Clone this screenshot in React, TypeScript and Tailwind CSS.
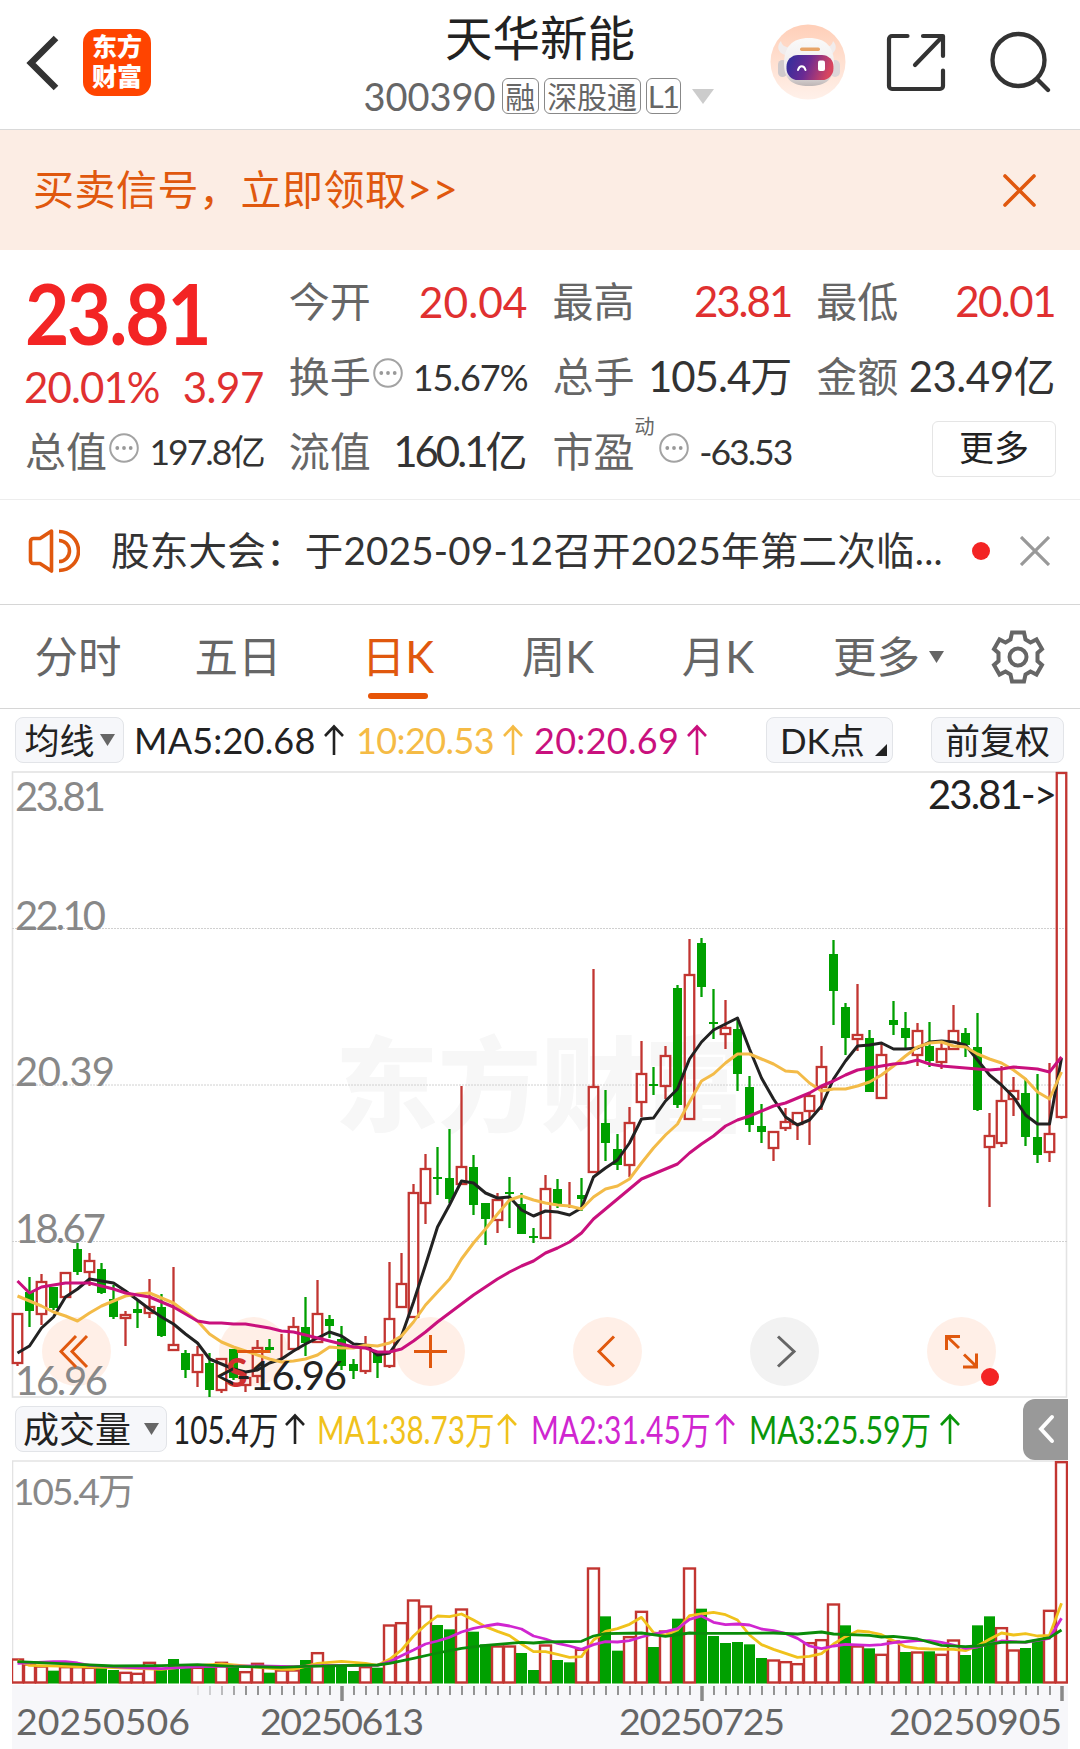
import type { ReactNode } from 'react'

type Candle = [top: number, bottom: number, high: number, low: number, up: 0 | 1]

// one entry per trading day, in chart coordinates
const candles: Candle[] = [
  [1314, 1363, 1314, 1366, 1], [1292, 1311, 1277, 1327, 0], [1282, 1314, 1274, 1325, 1], [1287, 1308, 1287, 1310, 0],
  [1273, 1297, 1273, 1297, 1], [1249, 1272, 1243, 1275, 0], [1261, 1272, 1253, 1286, 1], [1269, 1293, 1263, 1294, 0],
  [1299, 1317, 1285, 1319, 0], [1315, 1318, 1311, 1346, 1], [1309, 1313, 1300, 1328, 0], [1307, 1313, 1279, 1318, 1],
  [1307, 1336, 1294, 1337, 0], [1345, 1350, 1267, 1350, 1], [1353, 1370, 1350, 1378, 0], [1355, 1372, 1346, 1387, 1],
  [1363, 1390, 1353, 1397, 0], [1359, 1390, 1359, 1393, 1], [1349, 1378, 1349, 1380, 0], [1378, 1385, 1373, 1392, 1],
  [1348, 1376, 1340, 1383, 1], [1347, 1350, 1339, 1353, 0], [1349, 1349, 1334, 1360, 1], [1327, 1349, 1317, 1349, 1],
  [1327, 1343, 1297, 1356, 0], [1314, 1342, 1280, 1342, 1], [1319, 1326, 1315, 1338, 0], [1339, 1366, 1326, 1370, 0],
  [1364, 1371, 1359, 1379, 0], [1348, 1371, 1336, 1374, 1], [1353, 1363, 1353, 1378, 0], [1319, 1366, 1262, 1368, 1],
  [1284, 1307, 1253, 1307, 1], [1193, 1317, 1184, 1317, 1], [1169, 1203, 1154, 1224, 1], [1178, 1178, 1147, 1195, 0],
  [1178, 1199, 1129, 1203, 0], [1167, 1184, 1086, 1184, 1], [1167, 1205, 1155, 1215, 0], [1203, 1219, 1203, 1245, 0],
  [1200, 1220, 1193, 1233, 1], [1193, 1193, 1177, 1228, 0], [1204, 1234, 1193, 1234, 0], [1237, 1237, 1228, 1243, 0],
  [1189, 1238, 1175, 1238, 1], [1189, 1204, 1179, 1208, 0], [1208, 1208, 1182, 1208, 1], [1195, 1199, 1178, 1211, 0],
  [1087, 1172, 969, 1172, 1], [1123, 1143, 1090, 1161, 0], [1149, 1165, 1134, 1170, 0], [1123, 1165, 1107, 1177, 1],
  [1074, 1102, 1041, 1117, 1], [1085, 1085, 1067, 1095, 0], [1056, 1086, 1046, 1099, 1], [988, 1105, 985, 1108, 0],
  [975, 1119, 939, 1119, 1], [943, 987, 938, 997, 0], [1023, 1023, 989, 1039, 0], [1028, 1034, 1000, 1049, 1],
  [1029, 1074, 1019, 1091, 0], [1087, 1125, 1076, 1132, 0], [1126, 1132, 1104, 1143, 0], [1132, 1148, 1132, 1161, 1],
  [1122, 1128, 1108, 1131, 1], [1113, 1124, 1113, 1140, 1], [1096, 1111, 1092, 1145, 1], [1067, 1087, 1046, 1110, 1],
  [954, 991, 940, 1025, 0], [1007, 1038, 1003, 1055, 0], [1035, 1039, 984, 1051, 1], [1038, 1092, 1030, 1092, 0],
  [1055, 1098, 1043, 1099, 1], [1020, 1025, 1001, 1035, 0], [1028, 1038, 1012, 1048, 0], [1031, 1055, 1023, 1066, 1],
  [1046, 1061, 1022, 1067, 0], [1049, 1062, 1043, 1069, 1], [1031, 1049, 1005, 1049, 1], [1033, 1045, 1028, 1057, 0],
  [1047, 1110, 1013, 1111, 0], [1136, 1147, 1113, 1207, 1], [1101, 1143, 1066, 1147, 1], [1091, 1099, 1077, 1116, 1],
  [1093, 1137, 1078, 1146, 0], [1137, 1155, 1074, 1163, 0], [1134, 1152, 1063, 1162, 1], [773, 1117, 773, 1119, 1],
]

const ma5 = [
  1353, 1346, 1328, 1317, 1297, 1289, 1279, 1281, 1283, 1291, 1300, 1309, 1317, 1324, 1334, 1343, 1359, 1364, 1369, 1372,
  1370, 1363, 1359, 1351, 1344, 1338, 1332, 1336, 1344, 1345, 1355, 1353, 1336, 1302, 1265, 1227, 1205, 1181, 1183, 1193,
  1198, 1197, 1210, 1216, 1211, 1212, 1215, 1208, 1177, 1168, 1160, 1143, 1119, 1118, 1101, 1089, 1059, 1042, 1030, 1024,
  1018, 1049, 1078, 1099, 1117, 1125, 1120, 1106, 1079, 1061, 1046, 1045, 1043, 1049, 1049, 1048, 1042, 1041, 1042, 1045,
  1060, 1075, 1085, 1097, 1115, 1124, 1124, 1058,
]
const ma10 = [
  1296, 1301, 1306, 1312, 1316, 1321, 1313, 1306, 1301, 1296, 1294, 1293, 1298, 1303, 1312, 1321, 1334, 1342, 1347, 1351,
  1355, 1359, 1362, 1361, 1359, 1355, 1347, 1348, 1348, 1345, 1346, 1343, 1336, 1322, 1305, 1292, 1279, 1259, 1243, 1229,
  1214, 1200, 1196, 1200, 1203, 1205, 1206, 1209, 1197, 1189, 1186, 1179, 1163, 1148, 1135, 1124, 1102, 1081, 1074, 1063,
  1054, 1054, 1059, 1064, 1071, 1072, 1083, 1091, 1089, 1089, 1086, 1082, 1075, 1066, 1056, 1047, 1043, 1042, 1046, 1047,
  1054, 1059, 1063, 1070, 1079, 1092, 1099, 1072,
]
const ma20 = [
  1281, 1293, 1287, 1285, 1283, 1283, 1283, 1286, 1289, 1293, 1295, 1297, 1302, 1307, 1314, 1321, 1323, 1323, 1324, 1324,
  1326, 1328, 1331, 1332, 1335, 1338, 1341, 1344, 1347, 1348, 1352, 1352, 1349, 1341, 1332, 1322, 1313, 1304, 1295, 1287,
  1279, 1272, 1266, 1261, 1253, 1248, 1242, 1233, 1219, 1209, 1199, 1189, 1179, 1174, 1169, 1164, 1153, 1144, 1136, 1126,
  1120, 1116, 1111, 1106, 1103, 1098, 1093, 1086, 1081, 1075, 1070, 1068, 1066, 1064, 1063, 1060, 1064, 1066, 1067, 1068,
  1069, 1070, 1069, 1067, 1068, 1069, 1072, 1057,
]

// bar tops, a third of a pixel each
const volumes = [
  807, 822, 828, 842, 830, 830, 832, 833, 840, 847, 850, 817, 835, 807, 833, 832, 830, 817, 832, 845, 820, 848,
  840, 840, 810, 788, 830, 822, 843, 830, 833, 705, 698, 630, 648, 705, 718, 657, 725, 763, 768, 768, 789, 840,
  765, 810, 817, 778, 534, 679, 782, 740, 664, 771, 723, 686, 534, 656, 738, 759, 756, 763, 804, 810, 815, 821,
  758, 749, 642, 706, 768, 775, 793, 753, 786, 786, 784, 793, 750, 795, 706, 679, 713, 780, 774, 750, 661, 215,
]
const volumeColors =
  'rrrgrrrggrrrgggrgrgrrgrrgrgggrgrrrrggrggrrggrggrrggrrgrgrgggggg' + 'rrrrrrgrgrrgrgrrgggrrggrr'

const volMa1 = [
  [0, 812], [1, 826], [5, 830], [8, 833], [12, 838], [14, 830], [17, 822], [19, 828], [22, 838], [23, 838], [25, 820],
  [27, 814], [29, 820], [30, 826], [31, 808], [32, 780], [33, 738], [34, 705], [35, 678], [36, 680], [37, 672], [38, 690],
  [39, 710], [40, 724], [41, 737], [42, 762], [43, 785], [44, 785], [45, 793], [46, 802], [47, 800], [48, 750], [49, 724],
  [50, 716], [51, 703], [52, 682], [53, 728], [54, 735], [55, 720], [56, 677], [57, 672], [58, 667], [59, 674], [60, 690],
  [61, 735], [62, 764], [63, 778], [64, 790], [65, 802], [66, 799], [67, 791], [68, 762], [69, 740], [70, 723], [71, 726],
  [72, 734], [73, 752], [74, 770], [75, 775], [76, 777], [78, 778], [79, 782], [80, 768], [81, 748], [82, 729], [83, 735],
  [84, 731], [85, 738], [86, 736], [87, 640],
]
const volMa2 = [
  [0, 820], [3, 815], [4, 815], [5, 819], [6, 826], [9, 832], [12, 836], [15, 830], [20, 828], [23, 830], [26, 826],
  [30, 826], [31, 815], [32, 797], [33, 780], [34, 762], [35, 753], [36, 742], [37, 726], [38, 715], [39, 708], [40, 702],
  [41, 708], [42, 717], [43, 738], [44, 747], [45, 760], [46, 768], [47, 778], [48, 764], [49, 755], [50, 756], [51, 752],
  [52, 741], [53, 732], [54, 725], [55, 716], [56, 688], [57, 678], [58, 697], [59, 704], [60, 702], [61, 705], [62, 717],
  [63, 722], [64, 730], [65, 745], [66, 768], [67, 776], [68, 768], [69, 763], [71, 766], [72, 764], [73, 758], [75, 752],
  [76, 752], [77, 757], [78, 765], [79, 775], [80, 771], [82, 753], [84, 757], [86, 745], [87, 685],
]
const volMa3 = [
  [0, 815], [5, 823], [8, 828], [12, 827], [15, 824], [18, 829], [22, 832], [24, 829], [27, 827], [30, 825], [31, 820],
  [33, 805], [35, 789], [37, 775], [39, 766], [41, 760], [42, 757], [43, 759], [44, 756], [47, 754], [48, 738], [49, 731],
  [52, 729], [54, 739], [56, 729], [57, 730], [60, 730], [63, 729], [65, 732], [67, 726], [68, 732], [71, 736], [72, 741],
  [73, 739], [75, 747], [77, 766], [79, 770], [80, 768], [82, 757], [84, 756], [86, 743], [87, 720],
]

const UP = '#c23531'
const DOWN = '#00a000'

const px = (i: number) => 17.5 + i * 12
const vy = (v: number) => 1390 + v / 3
const line = (ys: number[]) => ys.map((y, i) => `${px(i)},${y}`).join(' ')
const volLine = (pts: number[][]) => pts.map(([i, v]) => `${px(i)},${vy(v)}`).join(' ')

function MoreDots() {
  return (
    <svg width="30" height="30" viewBox="0 0 30 30" fill="none" className="mb-2 ml-[2px] shrink-0">
      <circle cx="15" cy="15" r="13.8" stroke="#a3a3a3" strokeWidth="2" />
      <g fill="#999">
        <circle cx="8.3" cy="15" r="1.9" />
        <circle cx="15" cy="15" r="1.9" />
        <circle cx="21.7" cy="15" r="1.9" />
      </g>
    </svg>
  )
}

function UpArrow() {
  return (
    <svg width="20" height="32" viewBox="0 0 20 32" fill="none" stroke="currentColor" strokeWidth="2.6" className="shrink-0">
      <path d="M10 31V3M1 12l9-9.500 9 9.500" />
    </svg>
  )
}

function Caret({ className = '' }: { className?: string }) {
  return (
    <svg width="15" height="12" viewBox="0 0 15 12" className={`shrink-0 ${className}`}>
      <path d="M0 0h15L7.5 12z" fill="currentColor" />
    </svg>
  )
}

function Cell({ label, value, valueClass, icon }: { label: string; value: string; valueClass: string; icon?: ReactNode }) {
  return (
    <div className="flex h-[75px] items-center justify-between whitespace-nowrap">
      <div className="flex items-center">
        <span className="text-[41px] text-[#666]">{label}</span>
        {icon}
      </div>
      <span className={valueClass}>{value}</span>
    </div>
  )
}

function Header() {
  return (
    <header className="flex h-[130px] border-b border-[#d9d9d9]">
      <div className="flex w-[340px] items-start gap-[24px] pl-[26px] pt-[29px]">
        <svg width="33" height="67" viewBox="0 0 33 67" fill="none" stroke="#333" strokeWidth="6.5">
          <path d="M30 9L5 34l25 25" />
        </svg>
        <div className="flex h-[67px] w-[68px] flex-col items-center justify-center rounded-[14px] bg-[#ff4400] pb-[3px] text-[25px] font-black leading-[30px] text-white">
          <span>东方</span>
          <span>财富</span>
        </div>
      </div>
      <div className="flex w-[400px] flex-col items-center whitespace-nowrap">
        <h1 className="mt-[5px] h-[66px] text-[47.500px] leading-[66px] text-[#222]">天华新能</h1>
        <div className="-ml-[3px] mt-[5px] flex h-[40px] items-center text-[#666]">
          <span className="mr-[6px] text-[38px]">300390</span>
          <span className="mr-[5px] flex h-[36px] w-[37px] items-center justify-center rounded-md border-[1.5px] border-[#888] text-[30px]">融</span>
          <span className="mr-[5px] flex h-[36px] w-[97px] items-center justify-center rounded-md border-[1.5px] border-[#888] text-[30px]">深股通</span>
          <span className="flex h-[36px] w-[35px] items-center justify-center rounded-md border-[1.5px] border-[#888] text-[31px] tracking-[-1.500px]">L1</span>
          <svg width="22" height="15" viewBox="0 0 22 15" className="ml-[11px]">
            <path d="M0 0h22L11 15z" fill="#ccc" />
          </svg>
        </div>
      </div>
      <div className="flex items-start pl-[30px] pt-[24px]">
        <svg width="76" height="76" viewBox="0 0 76 76">
          <defs>
            <linearGradient id="halo" x1="0" y1="0" x2="0" y2="1">
              <stop offset="0" stopColor="#ffcfb8" />
              <stop offset="1" stopColor="#fff1ea" />
            </linearGradient>
            <linearGradient id="visor" x1="0" y1="0" x2="1" y2="0.2">
              <stop offset="0" stopColor="#2c2f9e" />
              <stop offset="0.5" stopColor="#6b2a93" />
              <stop offset="1" stopColor="#d8455f" />
            </linearGradient>
            <linearGradient id="shell" x1="0" y1="0" x2="0" y2="1">
              <stop offset="0" stopColor="#fafafa" />
              <stop offset="0.7" stopColor="#eeeaea" />
              <stop offset="1" stopColor="#bdb5b5" />
            </linearGradient>
          </defs>
          <circle cx="38" cy="38" r="37.5" fill="url(#halo)" />
          <path d="M11 17c-5 5-3 12 4 14l6-8c-5 1-9-1-10-6zM63 17c5 5 3 12-4 14l-6-8c5 1 9-1 10-6z" fill="#f1ecec" />
          <rect x="8" y="36" width="9" height="17" rx="4.5" fill="#cfc9cb" />
          <rect x="60" y="36" width="10" height="17" rx="5" fill="#dcd6d8" />
          <path d="M14 40c0-17 8-26 25-26s25 9 25 26c0 15-8 22-25 22S14 55 14 40z" fill="url(#shell)" />
          <rect x="30" y="23.5" width="20" height="3.5" rx="1.7" fill="#e7a468" />
          <rect x="16.500" y="31" width="47" height="25" rx="11.500" fill="url(#visor)" />
          <path d="M28 46c1.500-5 6-5 7.500 0" stroke="#fff" strokeWidth="2" fill="none" strokeLinecap="round" />
          <rect x="48" y="36.500" width="7" height="10.500" rx="2" fill="#fff" />
        </svg>
        <svg width="60" height="60" viewBox="0 0 60 60" fill="none" stroke="#333" strokeWidth="4.200" strokeLinecap="round" strokeLinejoin="round" className="ml-[40px] mt-[9px]">
          <path d="M21.500 3H6a3 3 0 0 0-3 3v47a3 3 0 0 0 3 3h48a3 3 0 0 0 3-3V37.500M37 3h20v20M56 4L29 32" />
        </svg>
        <svg width="62" height="62" viewBox="0 0 62 62" fill="none" stroke="#333" strokeWidth="4.300" strokeLinecap="round" className="ml-[44px] mt-[7px]">
          <circle cx="28.500" cy="29" r="26" />
          <path d="M47 48l11 11" />
        </svg>
      </div>
    </header>
  )
}

function Quote() {
  return (
    <section className="grid h-[250px] auto-rows-[75px] grid-cols-4 content-start gap-x-[25px] border-b border-[#ededed] px-[25px] pt-[14px]">
      <div className="row-span-2 flex h-[150px] flex-col whitespace-nowrap text-[#f32424]">
        <div className="flex h-[98px] items-center text-[85px] font-bold leading-none">
          <span className="inline-block origin-left scale-x-[0.900] tracking-[-2.500px]">23.81</span>
        </div>
        <div className="flex h-[54px] items-center justify-between text-[42px] leading-none text-[#e03030]">
          <span className="-ml-[1px] tracking-[-0.900px]">20.01%</span>
          <span className="tracking-[-0.500px]">3.97</span>
        </div>
      </div>
      <Cell label="今开" value="20.04" valueClass="text-[42.500px] text-[#e03030]" />
      <Cell label="最高" value="23.81" valueClass="text-[42px] text-[#e03030] tracking-[-2px]" />
      <Cell label="最低" value="20.01" valueClass="text-[42px] text-[#e03030] tracking-[-1.500px]" />
      <Cell label="换手" value="15.67%" valueClass="text-[36px] text-[#333] tracking-[-1px]" icon={<MoreDots />} />
      <Cell label="总手" value="105.4万" valueClass="text-[42px] text-[#333] tracking-[-1px]" />
      <Cell label="金额" value="23.49亿" valueClass="text-[42px] text-[#333] tracking-[-0.500px]" />
      <Cell label="总值" value="197.8亿" valueClass="text-[35.500px] text-[#333] tracking-[-2px]" icon={<MoreDots />} />
      <Cell label="流值" value="160.1亿" valueClass="mr-[3px] text-[42px] text-[#333] tracking-[-3px]" />
      <Cell
        label="市盈"
        value="-63.53"
        valueClass="text-[35.500px] text-[#333] tracking-[-2px]"
        icon={<><sup className="mb-8 w-[22px] text-[20px] leading-none text-[#666]">动</sup><MoreDots /></>}
      />
      <div className="flex h-[75px] items-center justify-end pb-[5px]">
        <button className="-mr-[1px] h-[56px] w-[124px] rounded-md border-[1.5px] border-[#e5e5e5] pb-[3px] text-[35px] leading-none text-[#222]">更多</button>
      </div>
    </section>
  )
}

function News() {
  return (
    <div className="flex h-[105px] items-center border-b border-[#d6d6d6] pb-[2px]">
      <svg width="52" height="46" viewBox="0 0 52 46" fill="none" stroke="#e0580e" strokeWidth="3.600" strokeLinejoin="round" className="ml-[28px]">
        <path d="M23.500 3L12 10.500H5.500A3 3 0 0 0 2.500 13.500v19a3 3 0 0 0 3 3H12L23.500 43zM31 3.500a19.500 19.500 0 0 1 0 39M31 12.500a10.500 10.500 0 0 1 0 21" />
      </svg>
      <p className="ml-[31px] w-[840px] whitespace-nowrap text-[38.500px] tracking-[0.250px] text-[#333]">股东大会：于2025-09-12召开2025年第二次临...</p>
      <span className="ml-[21px] size-[18px] shrink-0 rounded-full bg-[#f32424]" />
      <svg width="30" height="30" viewBox="0 0 30 30" stroke="#999" strokeWidth="3.200" className="ml-[30px] shrink-0">
        <path d="M1 1l28 28M29 1L1 29" />
      </svg>
    </div>
  )
}

const tabs = ['分时', '五日', '日K', '周K', '月K']

function Tabs() {
  return (
    <nav className="flex h-[104px] items-center whitespace-nowrap border-b border-[#d6d6d6] text-[43.500px] text-[#666]">
      {tabs.map(tab => (
        <div key={tab} className="relative -left-[2px] flex w-[160px] justify-center">
          <span className={tab === '日K' ? 'text-[#e0580e]' : ''}>{tab}</span>
          {tab === '日K' && <i className="absolute -bottom-[10px] h-[6px] w-[60px] rounded-full bg-[#e75407]" />}
        </div>
      ))}
      <div className="ml-[33px] flex items-center gap-[9px]">
        更多
        <Caret />
      </div>
      <svg width="54" height="54" viewBox="-27 -27 54 54" fill="none" stroke="#666" strokeWidth="4" className="ml-[47px]">
        <path d="M-6-24.500H6L7.500-17.500 12.500-14.500 18.500-17.500 24-8 19.500-4V4L24 8 18.500 17.500 12.500 14.500 7.500 17.500 6 24.500H-6L-7.500 17.500-12.500 14.500-18.500 17.500-24 8-19.500 4V-4L-24-8-18.500-17.500-12.500-14.500-7.500-17.500z" />
        <circle r="8.500" />
      </svg>
    </nav>
  )
}

function MaBar() {
  return (
    <div className="flex h-[62px] items-center whitespace-nowrap pl-[15px] text-[36px] leading-none">
      <button className="flex h-[46px] w-[109px] items-center justify-center gap-[5px] rounded-lg border-[1.5px] border-[#e2e4e8] bg-[#f6f7fa] text-[35px] text-[#222]">
        均线
        <Caret className="text-[#666]" />
      </button>
      <div className="ml-[10px] flex w-[222px] items-center gap-[8px] text-[#222]">
        <span className="tracking-[0.200px]">MA5:20.68</span>
        <UpArrow />
      </div>
      <div className="flex w-[178px] items-center gap-[9px] text-[#f5bb45]">
        <span className="tracking-[-0.600px]">10:20.53</span>
        <UpArrow />
      </div>
      <div className="flex w-[232px] items-center gap-[8px] text-[#c9107d]">
        <span className="tracking-[0.300px]">20:20.69</span>
        <UpArrow />
      </div>
      <button className="flex h-[46px] w-[127px] items-center justify-between rounded-lg border-[1.5px] border-[#e2e4e8] bg-[#f6f7fa] pl-[13px] pr-[5px] text-[35px] text-[#222]">
        DK点
        <svg width="12" height="12" viewBox="0 0 12 12" className="mt-[20px]">
          <path d="M12 0v12H0z" fill="#222" />
        </svg>
      </button>
      <button className="ml-[38px] h-[46px] w-[133px] rounded-lg border-[1.5px] border-[#e2e4e8] bg-[#f6f7fa] text-[35px] text-[#222]">前复权</button>
    </div>
  )
}

function KChart() {
  return (
    <svg width="1056" height="627" viewBox="12 771 1056 627" fill="none" className="ml-[12px] block overflow-visible">
      <g fill="#f7f7f7" fontSize="103" fontWeight="900">
        <text x="335" y="1124" textLength="412">东方财富</text>
      </g>
      <rect x="12.500" y="772" width="1054" height="625" stroke="#e3e3e3" strokeWidth="1.600" />
      <path d="M12 928.500H1067M12 1085H1067M12 1241.500H1067" stroke="#d0d0d0" strokeDasharray="2 1" />

      <g fill="#ff6414" fillOpacity="0.100">
        <circle cx="76.500" cy="1351.500" r="34.500" />
        <circle cx="253.500" cy="1351.500" r="34.500" />
        <circle cx="430.500" cy="1351.500" r="34.500" />
        <circle cx="607.500" cy="1351.500" r="34.500" />
        <circle cx="961.500" cy="1351.500" r="34.500" />
      </g>
      <circle cx="784.500" cy="1351.500" r="34.500" fill="#f2f2f2" />

      <g fill="#888" fontSize="40">
        <text x="15" y="811" textLength="91">23.81</text>
        <text x="15" y="930" textLength="91">22.10</text>
        <text x="15" y="1086" textLength="100">20.39</text>
        <text x="15" y="1243" textLength="91">18.67</text>
        <text x="15" y="1395" textLength="93">16.96</text>
      </g>

      {candles.map(([top, bottom, high, low, up], i) => {
        const x = px(i)
        const h = bottom - top
        return up ? (
          <g key={i} stroke={UP} strokeWidth="2.300">
            <path d={`M${x} ${high}V${top}M${x} ${bottom}V${low}`} />
            <rect x={x - 4.75} y={top} width="9.500" height={h} />
          </g>
        ) : (
          <g key={i}>
            <path d={`M${x} ${high}V${low}`} stroke={DOWN} strokeWidth="2.300" />
            <rect x={x - 4.5} y={top - (h ? 0 : 1)} width="9" height={Math.max(h, 2)} fill={DOWN} />
          </g>
        )
      })}

      <g strokeWidth="3" strokeLinejoin="round">
        <polyline points={line(ma5)} stroke="#222" />
        <polyline points={line(ma10)} stroke="#f3bb48" />
        <polyline points={line(ma20)} stroke="#c9107d" />
      </g>

      <text x="226" y="1387" fontSize="40" fontWeight="700" fill="#d03030">S</text>
      <g fill="#222" fontSize="40">
        <text x="928" y="809" textLength="129">23.81-&gt;</text>
        <text x="214" y="1390" textLength="133">&lt;-16.96</text>
      </g>

      {/* pan and zoom controls */}
      <g stroke="#e0580e" strokeWidth="3">
        <path d="M76 1336l-15 15.500 15 15.500M87 1336l-15 15.500 15 15.500M237 1351.500h33M414 1351.500h33M430.500 1335v33M614 1336.500l-15 15 15 15" />
        <path d="M959 1348l-12-11.500M946.500 1350v-13.500H960M964 1354.500l12 11.500M976.500 1353.500V1367H963" />
      </g>
      <path d="M778 1336.500l16 15-16 15" stroke="#666" strokeWidth="3" />
      <circle cx="990" cy="1377" r="9" fill="#f32424" />
    </svg>
  )
}

function VolumeBar() {
  return (
    <div className="flex h-[62px] items-center whitespace-nowrap pl-[15px] text-[38px] leading-none">
      <button className="flex h-[46px] w-[152px] items-center justify-center gap-[13px] rounded-lg border-[1.5px] border-[#e2e4e8] bg-[#f6f7fa] text-[36px] text-[#222]">
        成交量
        <Caret className="text-[#666]" />
      </button>
      <div className="ml-[6px] flex w-[144px] items-center gap-[7px] text-[#222]">
        <span className="w-[105px]"><b className="inline-block origin-left scale-x-[0.780] font-normal">105.4万</b></span>
        <UpArrow />
      </div>
      <div className="flex w-[214px] items-center gap-[5px] text-[#f0c21c]">
        <span className="w-[175px]"><b className="inline-block origin-left scale-x-[0.780] font-normal">MA1:38.73万</b></span>
        <UpArrow />
      </div>
      <div className="flex w-[218px] items-center gap-[5px] text-[#d026d0]">
        <span className="w-[179px]"><b className="inline-block origin-left scale-x-[0.790] font-normal">MA2:31.45万</b></span>
        <UpArrow />
      </div>
      <div className="flex w-[274px] items-center gap-[6px] text-[#0a960a]">
        <span className="w-[185px]"><b className="inline-block origin-left scale-x-[0.800] font-normal">MA3:25.59万</b></span>
        <UpArrow />
      </div>
      <button className="flex h-[61px] w-[45px] items-center justify-center rounded-l-xl bg-[#999]">
        <svg width="18" height="30" viewBox="0 0 18 30" fill="none" stroke="#fff" strokeWidth="4" strokeLinecap="round">
          <path d="M15 3L4 15l11 12" />
        </svg>
      </button>
    </div>
  )
}

function VolumeChart() {
  const ticks = Array.from({ length: 73 }, (_, k) => 198 + k * 12)
  return (
    <svg width="1056" height="289" viewBox="12 1460 1056 289" fill="none" className="ml-[12px] block">
      <rect x="12" y="1685" width="1056" height="64" fill="#f7f7fa" />
      <path d="M12.500 1684V1461H1066.500V1684" stroke="#e3e3e3" strokeWidth="1.600" />
      <text x="13" y="1505" fontSize="37" fill="#888" textLength="122">105.4万</text>

      {volumes.map((v, i) =>
        volumeColors[i] === 'r' ? (
          <rect key={i} x={px(i) - 5.5} y={vy(v) + 0.5} width="11" height={1682 - vy(v)} fill="#fff" stroke={UP} strokeWidth="2.400" />
        ) : (
          <rect key={i} x={px(i) - 5.5} y={vy(v)} width="11" height={1683.5 - vy(v)} fill={DOWN} />
        )
      )}

      <g strokeWidth="2.800" strokeLinejoin="round">
        <polyline points={volLine(volMa1)} stroke="#f0c21c" />
        <polyline points={volLine(volMa2)} stroke="#d026d0" />
        <polyline points={volLine(volMa3)} stroke="#0a8c0a" />
      </g>

      {ticks.map((x, k) => {
        const major = x === 342 || x === 702 || x === 1062
        return (
          <path
            key={x}
            d={`M${x} 1686V${major ? 1701 : 1695}`}
            stroke="#888"
            strokeWidth={major ? 3.5 : 1.8}
            opacity={k < 4 ? 0.2 + k * 0.2 : 1}
          />
        )
      })}

      <g fill="#666" fontSize="37.500">
        <text x="16" y="1735" textLength="174">20250506</text>
        <text x="260" y="1735" textLength="164">20250613</text>
        <text x="619" y="1735" textLength="166">20250725</text>
        <text x="889" y="1735" textLength="173">20250905</text>
      </g>
    </svg>
  )
}

export default function App() {
  return (
    <div className="h-[1749px] w-[1080px] overflow-hidden bg-white font-['Lato','Noto_Sans_CJK_SC',sans-serif]">
      <Header />
      <div className="flex h-[120px] items-center justify-between bg-[#fcede4] pl-[33px] pr-[44px] text-[41px] text-[#e0580e]">
        <span className="tracking-[0.500px]">买卖信号，立即领取<b className="text-[44px] font-normal leading-none">&gt;&gt;</b></span>
        <svg width="33" height="33" viewBox="0 0 33 33" stroke="currentColor" strokeWidth="3.600" strokeLinecap="round">
          <path d="M2 2l29 29M31 2L2 31" />
        </svg>
      </div>
      <Quote />
      <News />
      <Tabs />
      <MaBar />
      <KChart />
      <VolumeBar />
      <VolumeChart />
    </div>
  )
}
